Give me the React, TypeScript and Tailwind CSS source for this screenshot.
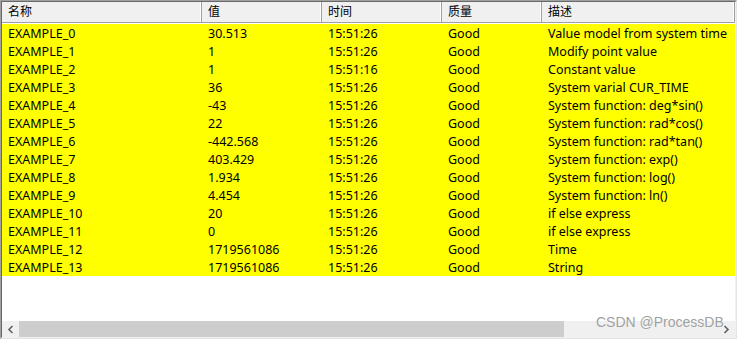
import React from 'react';

const rows = [
  ['EXAMPLE_0', '30.513', '15:51:26', 'Good', 'Value model from system time'],
  ['EXAMPLE_1', '1', '15:51:26', 'Good', 'Modify point value'],
  ['EXAMPLE_2', '1', '15:51:16', 'Good', 'Constant value'],
  ['EXAMPLE_3', '36', '15:51:26', 'Good', 'System varial CUR_TIME'],
  ['EXAMPLE_4', '-43', '15:51:26', 'Good', 'System function: deg*sin()'],
  ['EXAMPLE_5', '22', '15:51:26', 'Good', 'System function: rad*cos()'],
  ['EXAMPLE_6', '-442.568', '15:51:26', 'Good', 'System function: rad*tan()'],
  ['EXAMPLE_7', '403.429', '15:51:26', 'Good', 'System function: exp()'],
  ['EXAMPLE_8', '1.934', '15:51:26', 'Good', 'System function: log()'],
  ['EXAMPLE_9', '4.454', '15:51:26', 'Good', 'System function: ln()'],
  ['EXAMPLE_10', '20', '15:51:26', 'Good', 'if else express'],
  ['EXAMPLE_11', '0', '15:51:26', 'Good', 'if else express'],
  ['EXAMPLE_12', '1719561086', '15:51:26', 'Good', 'Time'],
  ['EXAMPLE_13', '1719561086', '15:51:26', 'Good', 'String'],
];

const headers = ['名称', '值', '时间', '质量', '描述'];
const widths = ['w-[200px]', 'w-[120px]', 'w-[120px]', 'w-[100px]', 'flex-1'];

export default function App() {
  return (
    <div
      className="relative w-[737px] h-[339px] bg-white border-l border-t border-[#a0a0a0] border-r border-b border-r-[#e3e3e3] border-b-[#e3e3e3] text-[12.5px] text-black"
      style={{ fontFamily: '"Noto Sans", "Noto Sans CJK SC", sans-serif' }}
    >
      <div className="flex flex-col h-full border-l border-t border-[#696969] border-r border-b border-r-[#f0f0f0] border-b-[#f0f0f0]">
        {/* header */}
        <div className="flex h-[21px] bg-[#f0f0f0] border-b border-[#a0a0a0] shrink-0">
          {headers.map((h, i) => (
            <div
              key={h}
              className={`${widths[i]} pl-[6px] border-r border-[#a0a0a0] shadow-[inset_-1px_0_0_#ffffff] leading-[20px] text-[12px]`}
            >
              {h}
            </div>
          ))}
        </div>
        <div className="h-px bg-white shrink-0" />
        {/* rows */}
        <div className="flex flex-col bg-[#ffff00] shrink-0">
          {rows.map((r) => (
            <div key={r[0]} className="flex h-[18px] leading-[19px]">
              {r.map((c, i) => (
                <div key={i} className={`${widths[i]} pl-[6px] whitespace-nowrap`}>
                  {c}
                </div>
              ))}
            </div>
          ))}
        </div>
        <div className="flex-1" />
        {/* horizontal scrollbar */}
        <div className="flex h-[16px] bg-[#f0f0f0] shrink-0">
          <div className="w-[17px] flex items-center justify-center">
            <svg width="7" height="9" viewBox="0 0 7 9">
              <path d="M5.5 1 L2 4.5 L5.5 8" stroke="#606060" strokeWidth="1.6" fill="none" />
            </svg>
          </div>
          <div className="w-[545px] bg-[#cdcdcd]" />
          <div className="flex-1" />
          <div className="w-[17px] flex items-center justify-center">
            <svg width="7" height="9" viewBox="0 0 7 9">
              <path d="M1.5 1 L5 4.5 L1.5 8" stroke="#606060" strokeWidth="1.6" fill="none" />
            </svg>
          </div>
        </div>
      </div>
      <div
        className="absolute left-[595px] top-[314px] text-[14px] text-[#a0a0a0] leading-none [text-shadow:0_0_1px_#ffffff]"
        style={{ fontFamily: '"Liberation Sans", Arial, sans-serif' }}
      >
        CSDN @ProcessDB
      </div>
    </div>
  );
}
